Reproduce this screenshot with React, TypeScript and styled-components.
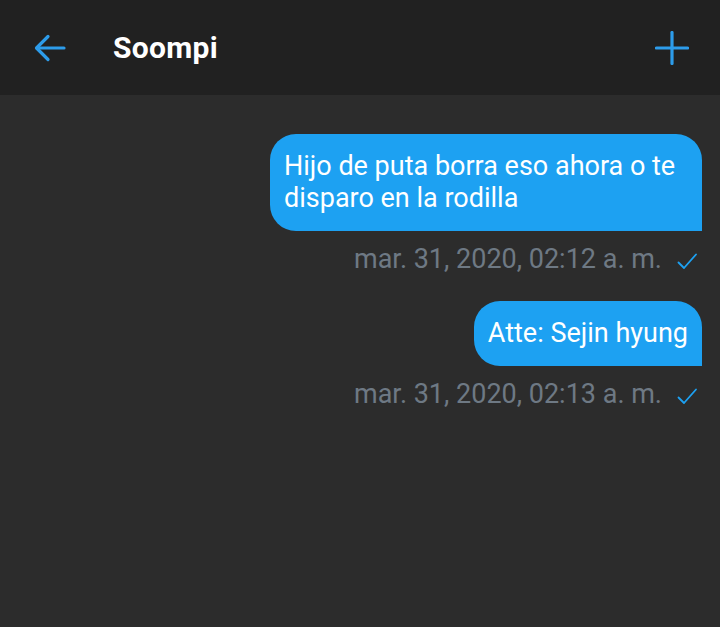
import React from "react";
import styled, { createGlobalStyle } from "styled-components";

const Global = createGlobalStyle`
  html, body { margin: 0; padding: 0; background: #2c2c2c; }
  body { font-family: Roboto, "Noto Sans", Arial, sans-serif; }
  #root { min-height: 627px; }
`;

const Screen = styled.div`
  width: 720px;
  height: 627px;
  display: flex;
  flex-direction: column;
  background: #2c2c2c;
  overflow: hidden;
`;

const Header = styled.header`
  height: 95px;
  flex: none;
  background: #212121;
  display: flex;
  align-items: center;
  padding: 0 30px 0 32px;
  box-sizing: border-box;
`;

const IconButton = styled.div`
  width: 36px;
  height: 36px;
  display: flex;
  align-items: center;
  justify-content: center;
  color: #2d9cea;
`;

const Title = styled.h1`
  margin: 0 0 0 45px;
  flex: 1;
  font-family: Roboto, Arial, sans-serif;
  font-weight: 700;
  font-size: 30px;
  color: #ffffff;
  letter-spacing: 0.3px;
`;

const Thread = styled.main`
  flex: 1;
  display: flex;
  flex-direction: column;
  align-items: flex-end;
  padding: 39px 18px 0 0;
`;

const Group = styled.div`
  display: flex;
  flex-direction: column;
  align-items: flex-end;
  margin-bottom: 26px;
`;

const Bubble = styled.div`
  max-width: 432px;
  box-sizing: border-box;
  background: #1da1f2;
  color: #ffffff;
  font-size: 27px;
  line-height: 32px;
  padding: 16px 14px 17px 14px;
  border-radius: 26px 26px 0 26px;
`;

const Meta = styled.div`
  display: flex;
  align-items: center;
  margin-top: 12px;
  font-size: 27px;
  line-height: 32px;
  color: #6e7984;
`;

const Check = styled.svg`
  width: 22px;
  height: 22px;
  margin-left: 14px;
  margin-right: 4px;
  margin-top: 4px;
  color: #1da1f2;
`;

const ArrowIcon = () => (
  <svg width="32" height="28" viewBox="0 0 32 28" fill="none" stroke="currentColor" strokeWidth="3.2" strokeLinecap="round" strokeLinejoin="round">
    <path d="M30 14H3" />
    <path d="M14 2.5L2.5 14L14 25.5" />
  </svg>
);

const PlusIcon = () => (
  <svg width="34" height="34" viewBox="0 0 34 34" fill="none" stroke="currentColor" strokeWidth="3.2" strokeLinecap="round">
    <path d="M17 1.5V32.5" />
    <path d="M1.5 17H32.5" />
  </svg>
);

const Message = ({ text, time }: { text: string; time: string }) => (
  <Group>
    <Bubble>{text}</Bubble>
    <Meta>
      <span>{time}</span>
      <Check viewBox="0 0 22 22" fill="none" stroke="currentColor" strokeWidth="1.8" strokeLinecap="round" strokeLinejoin="round">
        <path d="M2.5 12.5L8 18L20 4.5" />
      </Check>
    </Meta>
  </Group>
);

export default function App() {
  return (
    <>
      <Global />
      <Screen>
        <Header>
          <IconButton>
            <ArrowIcon />
          </IconButton>
          <Title>Soompi</Title>
          <IconButton>
            <PlusIcon />
          </IconButton>
        </Header>
        <Thread>
          <Message text="Hijo de puta borra eso ahora o te disparo en la rodilla" time="mar. 31, 2020, 02:12 a. m." />
          <Message text="Atte: Sejin hyung" time="mar. 31, 2020, 02:13 a. m." />
        </Thread>
      </Screen>
    </>
  );
}
